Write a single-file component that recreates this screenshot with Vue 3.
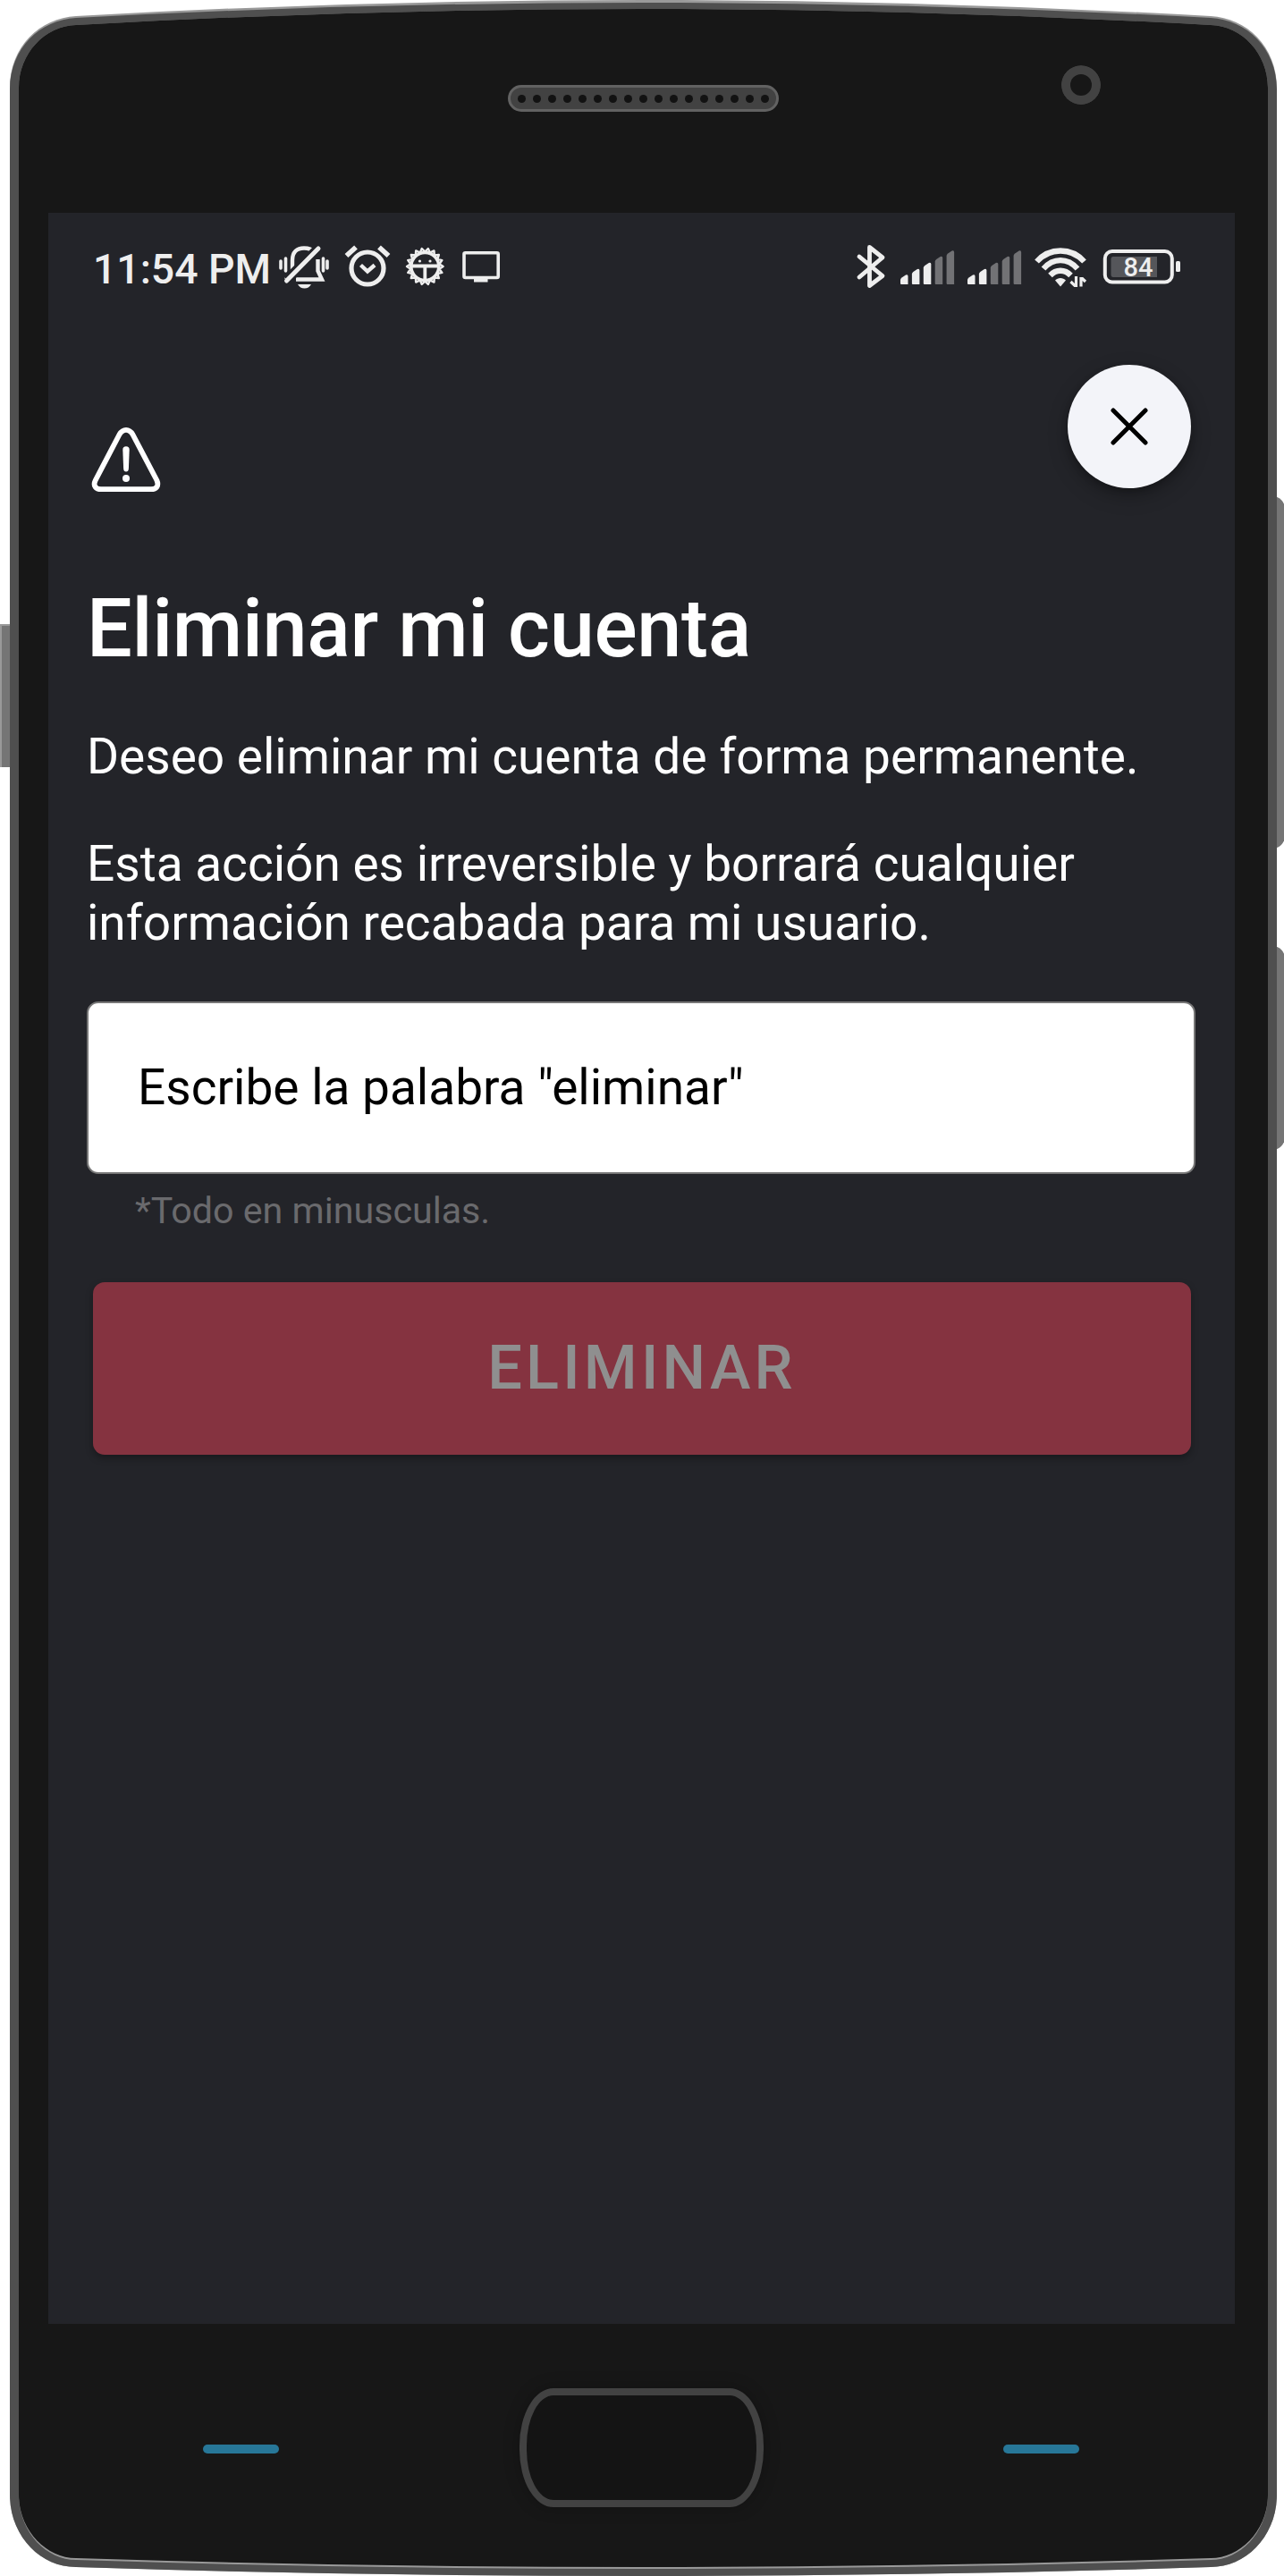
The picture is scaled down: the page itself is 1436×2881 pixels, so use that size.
<script setup>
import { ref } from 'vue'

const confirmation = ref('')
const speakerHoles = Array.from({ length: 17 }, (_, i) => i)

// One entry per network signal: x of the first bar and number of lit bars
const signals = [
  { start: 1007, view: '998 270 76 56', width: 76, lit: 3 },
  { start: 1082, view: '1074 270 75 56', width: 75, lit: 2 }
]
const barTops = [307, 300.5, 293.5, 286.5, 280]
const barPath = (start, i) => {
  const x = start + i * 12.9
  const y = barTops[i]
  return `M${x} ${y + 6}Q${x} ${y + 4.5} ${x + 1.5} ${y + 3.5}L${x + 6} ${y + 0.5}Q${x + 8.5} ${y - 0.5} ${x + 8.5} ${y + 2}V318H${x + 1}Q${x} 318 ${x} 317Z`
}

// Toothed rim of the debugging icon
const gearPoints = Array.from({ length: 36 }, (_, i) => {
  const angle = (i * Math.PI) / 18
  const r = i % 2 ? 20.3 : 16.3
  return `${(475.3 + r * Math.sin(angle)).toFixed(2)},${(298 - r * Math.cos(angle)).toFixed(2)}`
}).join(' ')
</script>

<template>
  <div class="device">
    <svg class="shell" viewBox="0 0 1436 2881" width="1436" height="2881" aria-hidden="true">
      <rect x="0" y="698" width="14" height="160" fill="#757575" />
      <path d="M0 698H12V700H2V858H0Z" fill="#999" />
      <rect x="1400" y="555" width="37" height="394" rx="14" fill="#757575" />
      <rect x="1400" y="1058" width="37" height="228" rx="14" fill="#757575" />
      <path d="M11 98C11 52 45 20 85 18Q718 -18 1354 18C1394 20 1428 52 1428 98V2790C1428 2836 1394 2871 1354 2871Q718 2891 85 2871C45 2871 11 2836 11 2790Z" fill="#999" />
      <path d="M11 100C11 54 45 22 85 20Q718 -14 1354 20C1394 22 1428 54 1428 100V2790C1428 2836 1394 2871 1354 2871Q718 2891 85 2871C45 2871 11 2836 11 2790Z" fill="#4f4f4f" />
      <path d="M21 98C21 60 50 29 85 28Q718 -8 1354 28C1389 29 1418 60 1418 98V2790C1418 2831 1388 2863 1354 2863Q718 2883 85 2863C51 2863 21 2831 21 2790Z" fill="#999" />
      <path d="M21 98C21 60 50 29 85 28Q718 -8 1354 28C1389 29 1418 60 1418 98V2790C1418 2829 1388 2861 1354 2861Q718 2881 85 2861C51 2861 21 2829 21 2790Z" fill="#171717" />
    </svg>

    <div class="top-bezel">
      <div class="speaker"><i v-for="n in speakerHoles" :key="n" class="hole"></i></div>
      <svg class="camera" width="44" height="44" viewBox="0 0 44 44">
        <circle cx="22" cy="22" r="22" fill="#333" />
        <path d="M38 7A22 22 0 1 1 6 37.500A22 22 0 0 1 38 7Z" fill="#424242" />
        <circle cx="22" cy="22" r="12" fill="#171717" />
      </svg>
    </div>

    <main class="screen">
      <div class="status">
        <span class="time">11:54 PM</span>
        <svg width="68" height="56" viewBox="310 270 68 56" fill="none" stroke="#eee" stroke-width="4.400">
          <path d="M319.500 312.500L327 305V291C327 282 332 277.500 340 277.500C345 277.500 349 279 351.500 282M355.500 290V303L360 312.500H331" />
          <path d="M321 313L355 279" stroke="#232429" stroke-width="11" />
          <path d="M320.500 314L356 278" stroke-width="5" stroke-linecap="round" />
          <path d="M314 292V300M319.500 289V303M361.500 289V303M366 292V300" stroke-width="3.600" stroke-linecap="round" />
          <path d="M333 318H348C346 321 344 322.500 340.500 322.500C337 322.500 335 321 333 318Z" fill="#eee" stroke="none" />
        </svg>
        <svg width="68" height="56" viewBox="378 270 68 56" fill="none" stroke="#eee" stroke-width="5.200">
          <circle cx="411" cy="300" r="18" />
          <path d="M387.500 286L398 276.500M434.500 286L424 276.500" stroke-width="5.600" />
          <path d="M403.500 296.500L411 303.500L419 296.500" stroke-width="4.400" />
        </svg>
        <svg width="60" height="56" viewBox="446 270 60 56" fill="none" stroke="#eee">
          <circle cx="475.300" cy="298" r="15.500" stroke-width="3.600" />
          <polygon :points="gearPoints" stroke-width="2.400" stroke-linejoin="round" />
          <path d="M460 297.500H490M475.300 298V315" stroke-width="3.800" />
          <circle cx="469.500" cy="292" r="1.600" fill="#eee" stroke="none" />
          <circle cx="481" cy="292" r="1.600" fill="#eee" stroke="none" />
        </svg>
        <svg width="60" height="56" viewBox="506 270 60 56">
          <rect x="519" y="282.700" width="38.200" height="27.800" rx="1.500" fill="none" stroke="#eee" stroke-width="3.600" />
          <path d="M530 311H545.500V315.500H530Z" fill="#eee" />
        </svg>

        <div class="indicators">
          <svg width="48" height="56" viewBox="950 270 48 56" fill="none" stroke="#eee" stroke-width="4.800" stroke-linejoin="round" stroke-linecap="round">
            <path d="M961 287L987 308.500L972.500 319.500V276.500L987 288L961 310" />
          </svg>
          <svg v-for="s in signals" :key="s.start" :width="s.width" height="56" :viewBox="s.view">
            <path v-for="(t, i) in barTops" :key="t" :d="barPath(s.start, i)" :fill="i < s.lit ? '#eee' : '#727275'" />
          </svg>
          <svg width="77" height="56" viewBox="1149 270 77 56" fill="none" stroke="#eee" stroke-width="6.300">
            <path d="M1159.500 292.500C1174 276.500 1198 276.500 1212.500 292.500" />
            <path d="M1167 300.500C1178 288 1194 288 1205 300.500" />
            <path d="M1174.500 308C1181 301 1191 301 1197.500 308" />
            <path d="M1180 313.500C1183 310 1189 310 1192 313.500L1186 320.500Z" fill="#eee" stroke="none" />
            <path d="M1203.500 309V319.500H1202L1197.500 315M1209 320.500V311.500H1210.500L1214 315" stroke-width="3.200" />
          </svg>
          <svg width="100" height="56" viewBox="1226 270 100 56">
            <rect x="1235.800" y="281" width="75" height="34.500" rx="8" fill="none" stroke="#eee" stroke-width="4" />
            <path d="M1245 287H1294V310H1245Q1242.500 310 1242.500 307V290Q1242.500 287 1245 287Z" fill="#55565a" />
            <rect x="1315" y="292" width="5" height="12" rx="1.500" fill="#eee" />
            <text x="1273" y="309.300" class="charge">84</text>
          </svg>
        </div>
      </div>

      <header class="head">
        <svg class="warning" width="80" height="76" viewBox="0 0 80 76" fill="none" stroke="#fff" stroke-linejoin="round">
          <path d="M33.500 9Q36.500 3.900 41 3.900Q45.500 3.900 48.500 9L75.300 60Q77.300 64.500 75.500 67.500Q73.500 70.200 69 70.200H13Q8.500 70.200 6.500 67.500Q4.500 64.500 6.800 60Z" stroke-width="5.800" />
          <path d="M37.300 26Q37.300 22.300 41 22.300Q44.700 22.300 44.700 26L43.900 47Q43.700 50.500 41 50.500Q38.300 50.500 38.100 47Z" fill="#fff" stroke="none" />
          <circle cx="41" cy="58" r="4" fill="#fff" stroke="none" />
        </svg>
        <button class="close" type="button" aria-label="Cerrar">
          <svg width="44" height="44" viewBox="0 0 44 44" fill="none" stroke="#000" stroke-width="5" stroke-linecap="round">
            <path d="M4 4L40 40M40 4L4 40" />
          </svg>
        </button>
      </header>

      <section class="content">
        <h1>Eliminar mi cuenta</h1>
        <p class="lead">Deseo eliminar mi cuenta de forma permanente.</p>
        <p class="note">Esta acción es irreversible y borrará cualquier<br />información recabada para mi usuario.</p>
        <input v-model="confirmation" class="field" type="text" placeholder="Escribe la palabra &quot;eliminar&quot;" />
        <p class="hint">*Todo en minusculas.</p>
        <button class="submit" type="button" disabled>ELIMINAR</button>
      </section>
    </main>

    <footer class="bottom-bezel">
      <i class="led"></i>
      <div class="home"></div>
      <i class="led"></i>
    </footer>
  </div>
</template>

<style>
body { margin: 0; background: #fff; }
</style>

<style scoped>
.device {
  position: relative;
  isolation: isolate;
  width: 1436px;
  height: 2881px;
  overflow: hidden;
  display: flex;
  flex-direction: column;
  font-family: Roboto, "Liberation Sans", sans-serif;
}
.device * { box-sizing: border-box; }
.shell { position: absolute; inset: 0; z-index: -1; }
svg { display: block; flex: none; }

.top-bezel { height: 238px; display: flex; flex: none; align-items: flex-start; padding-left: 568px; }
.speaker {
  width: 303px; height: 30px; margin-top: 95px; padding: 1px 8px 0;
  border: 3px solid #626262; border-radius: 15px; background: #424242;
  display: flex; align-items: center; justify-content: space-between;
}
.hole { width: 9px; height: 9px; border-radius: 50%; background: #121212; }
.camera { margin: 73px 0 0 316px; border-radius: 50%; }

.screen { width: 1371px; width: 1327px; height: 2361px; flex: none; margin-left: 54px; background: #232429; }
.status { height: 88px; padding: 32px 55px 0 50px; display: flex; align-items: flex-start; }
.time { width: 206px; font-size: 46.300px; font-weight: 500; line-height: 62px; color: #eee; white-space: nowrap; }
.indicators { display: flex; margin-left: auto; }
.charge { font: 500 29px Roboto, sans-serif; fill: #eee; text-anchor: middle; }

.head { height: 324px; padding: 82px 49px 0 46px; display: flex; justify-content: space-between; align-items: flex-start; }
.warning { margin-top: 69px; }
.close {
  width: 138px; height: 138px; border: 0; padding: 0; border-radius: 50%; background: #f3f4f9;
  display: flex; align-items: center; justify-content: center;
  box-shadow: 0 8px 22px rgba(0, 0, 0, .28), 0 3px 7px rgba(0, 0, 0, .2);
}

.content { display: flex; flex-direction: column; padding: 0 44px 0 43px; color: #fff; }
h1, p { margin: 0; white-space: nowrap; }
h1 { font-size: 90px; font-weight: 500; line-height: 108px; letter-spacing: -.300px; }
.lead, .note { font-size: 55px; line-height: 65.600px; }
.lead { margin-top: 56.300px; }
.note { margin-top: 54.400px; }
.field {
  height: 193px; margin-top: 54.500px; padding: 0 55px; border: 2px solid #777; border-radius: 13px;
  background: #fff; font: 400 55px Roboto, sans-serif; color: #000; outline: 0;
}
.field::placeholder { color: #000; opacity: 1; }
.hint { margin: 17px 0 0 54px; font-size: 41.200px; line-height: 48px; color: #6a6a6d; }
.submit {
  height: 193px; margin: 56px 5px 0 7px; padding: 0 0 1px; border: 0; border-radius: 13px; background: #853340;
  color: #8f8f8f; font: 500 68.500px Roboto, sans-serif; letter-spacing: 4.200px;
  box-shadow: 0 4px 8px rgba(0, 0, 0, .3);
}

.bottom-bezel { display: flex; justify-content: space-between; align-items: flex-start; padding: 72px 229px 0 227px; }
.led { width: 85px; height: 10px; margin-top: 63px; border-radius: 5px; background: #277798; }
.home {
  width: 273px; height: 133px; border: 8px solid #424242; border-radius: 38px / 64px;
  background: #141414; box-shadow: 0 0 18px rgba(0, 0, 0, .25);
}
</style>
